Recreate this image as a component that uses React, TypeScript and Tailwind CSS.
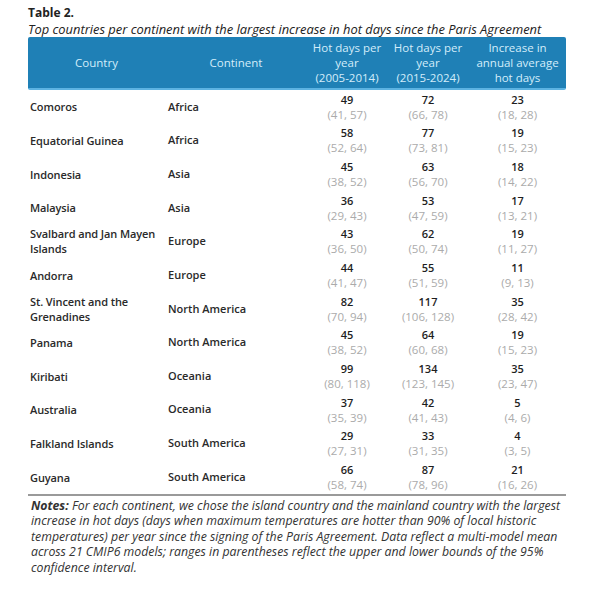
const rows = [
  { country: "Comoros", continent: "Africa", a: "49", ar: "(41, 57)", b: "72", br: "(66, 78)", c: "23", cr: "(18, 28)" },
  { country: "Equatorial Guinea", continent: "Africa", a: "58", ar: "(52, 64)", b: "77", br: "(73, 81)", c: "19", cr: "(15, 23)" },
  { country: "Indonesia", continent: "Asia", a: "45", ar: "(38, 52)", b: "63", br: "(56, 70)", c: "18", cr: "(14, 22)" },
  { country: "Malaysia", continent: "Asia", a: "36", ar: "(29, 43)", b: "53", br: "(47, 59)", c: "17", cr: "(13, 21)" },
  { country: "Svalbard and Jan Mayen Islands", continent: "Europe", a: "43", ar: "(36, 50)", b: "62", br: "(50, 74)", c: "19", cr: "(11, 27)" },
  { country: "Andorra", continent: "Europe", a: "44", ar: "(41, 47)", b: "55", br: "(51, 59)", c: "11", cr: "(9, 13)" },
  { country: "St. Vincent and the Grenadines", continent: "North America", a: "82", ar: "(70, 94)", b: "117", br: "(106, 128)", c: "35", cr: "(28, 42)" },
  { country: "Panama", continent: "North America", a: "45", ar: "(38, 52)", b: "64", br: "(60, 68)", c: "19", cr: "(15, 23)" },
  { country: "Kiribati", continent: "Oceania", a: "99", ar: "(80, 118)", b: "134", br: "(123, 145)", c: "35", cr: "(23, 47)" },
  { country: "Australia", continent: "Oceania", a: "37", ar: "(35, 39)", b: "42", br: "(41, 43)", c: "5", cr: "(4, 6)" },
  { country: "Falkland Islands", continent: "South America", a: "29", ar: "(27, 31)", b: "33", br: "(31, 35)", c: "4", cr: "(3, 5)" },
  { country: "Guyana", continent: "South America", a: "66", ar: "(58, 74)", b: "87", br: "(78, 96)", c: "21", cr: "(16, 26)" },
];

const cols = "grid grid-cols-[137px_142px_80px_82px_97px]";

function NumCell({ value, range }: { value: string; range: string }) {
  return (
    <div className="flex flex-col items-center justify-center leading-[15px]">
      <span className="font-semibold text-[#1e1e1e]">{value}</span>
      <span className="text-[11.5px] text-[#ababab]">{range}</span>
    </div>
  );
}

export default function App() {
  return (
    <div className="min-h-[589px] w-[614px] bg-white pl-[28px] pt-[5px] font-['Open_Sans',sans-serif] text-[11px] text-[#222]">
      <div className="text-[12px] font-bold leading-[16px]">Table 2.</div>
      <div className="text-[12.9px] italic leading-[16px] text-[#222]">
        Top countries per continent with the largest increase in hot days since the Paris Agreement
      </div>

      <div className="w-[538px]">
        {/* Header */}
        <div className={`${cols} h-[53px] items-center rounded-[2px] border-b-2 border-[#5cb3e2] bg-[#1f80b6] text-center text-[11.5px] leading-[15px] text-[#d4edfa]`}>
          <div>Country</div>
          <div>Continent</div>
          <div>Hot days per<br />year<br />(2005-2014)</div>
          <div>Hot days per<br />year<br />(2015-2024)</div>
          <div>Increase in<br />annual average<br />hot days</div>
        </div>

        {/* Body */}
        {rows.map((r) => (
          <div key={r.country} className={`${cols} h-[33.67px] items-center`}>
            <div className="pl-[2px] font-semibold leading-[15px] tracking-[-0.1px] text-[#2a2a2a]">{r.country}</div>
            <div className="pl-[3px] font-semibold text-[#2a2a2a]">{r.continent}</div>
            <NumCell value={r.a} range={r.ar} />
            <NumCell value={r.b} range={r.br} />
            <NumCell value={r.c} range={r.cr} />
          </div>
        ))}

        <div className="h-[2px] bg-[#9a9a9a]" />

        {/* Notes */}
        <p className="pl-[3px] pt-[2px] text-[12.3px] italic leading-[15.5px] text-[#333]">
          <span className="font-bold">Notes: </span>For each continent, we chose the island country and the mainland country with the largest increase in hot days (days when maximum temperatures are hotter than 90% of local historic temperatures) per year since the signing of the Paris Agreement. Data reflect a multi-model mean across 21 CMIP6 models; ranges in parentheses reflect the upper and lower bounds of the 95% confidence interval.
        </p>
      </div>
    </div>
  );
}
